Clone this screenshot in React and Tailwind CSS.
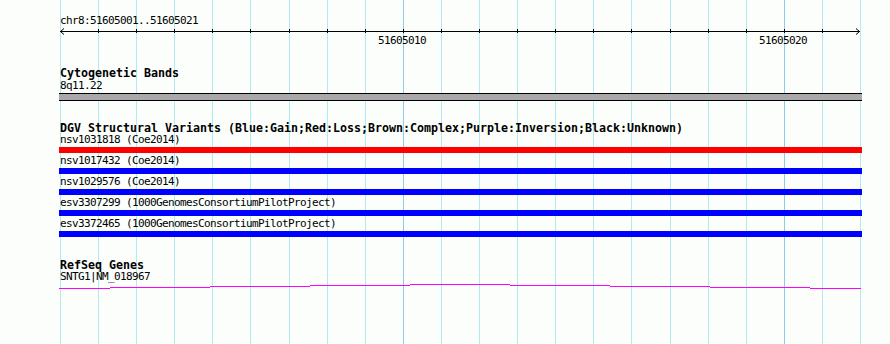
const GRID = Array.from({ length: 22 }, (_, i) => Math.round(60 + (i * 800) / 21));

const TRACKS = [
  { name: 'nsv1031818 (Coe2014)', color: 'bg-[#ff0000]' },
  { name: 'nsv1017432 (Coe2014)', color: 'bg-[#0000ff]' },
  { name: 'nsv1029576 (Coe2014)', color: 'bg-[#0000ff]' },
  { name: 'esv3307299 (1000GenomesConsortiumPilotProject)', color: 'bg-[#0000ff]' },
  { name: 'esv3372465 (1000GenomesConsortiumPilotProject)', color: 'bg-[#0000ff]' },
];

// intron line of the gene: [x0, x1, row]
const GENE = [
  [0, 51, 4],
  [51, 151, 3],
  [151, 251, 2],
  [251, 351, 1],
  [351, 451, 0],
  [451, 551, 1],
  [551, 651, 2],
  [651, 751, 3],
  [751, 802, 4],
];

function Label({ children, className = '' }) {
  return (
    <div className={'relative -top-px ml-px h-[12px] text-[11px] leading-[12px] tracking-[-0.62px] whitespace-pre text-black ' + className}>
      {children}
    </div>
  );
}

function Title({ children, className = '' }) {
  return (
    <div className={'relative -top-px ml-px h-[12px] text-[11.63px] font-bold leading-[12px] whitespace-pre text-black ' + className}>
      {children}
    </div>
  );
}

function Ruler() {
  return (
    <svg width="803" height="19" className="block">
      <line x1="1" y1="3.5" x2="801" y2="3.5" stroke="#000" />
      <polyline points="5,0.5 1.5,3.5 5,6.5" fill="none" stroke="#000" />
      <polyline points="797,0.5 800.5,3.5 797,6.5" fill="none" stroke="#000" />
      {GRID.slice(1, 21).map((x) => (
        <line key={x} x1={x - 59 + 0.5} y1="1" x2={x - 59 + 0.5} y2="5" stroke="#000" />
      ))}
      <text x="319" y="16" fontSize="11" letterSpacing="-0.62" fill="#000" fontFamily="DejaVu Sans Mono, monospace">
        51605010
      </text>
      <text x="700" y="16" fontSize="11" letterSpacing="-0.62" fill="#000" fontFamily="DejaVu Sans Mono, monospace">
        51605020
      </text>
    </svg>
  );
}

export default function App() {
  return (
    <div className="relative w-[890px] h-[344px] overflow-hidden bg-[#fbfefb] font-['DejaVu_Sans_Mono',monospace]">
      <svg width="890" height="344" className="absolute inset-0">
        {GRID.map((x, i) => (
          <rect key={x} x={x} y="0" width="1" height="344" fill={i === 9 || i === 19 ? '#8ccbec' : '#b2ebee'} />
        ))}
      </svg>

      <div className="relative flex flex-col pl-[59px] w-[862px]">
        <Label className="mt-[16px]">chr8:51605001..51605021</Label>
        <Ruler />

        <Title className="mt-[21px]">Cytogenetic Bands</Title>
        <Label className="mt-px">8q11.22</Label>
        <div className="h-[8px] border-y border-black bg-[#aaa8aa]" />

        <Title className="mt-[22px]">
          DGV Structural Variants (Blue:Gain;Red:Loss;Brown:Complex;Purple:Inversion;Black:Unknown)
        </Title>
        {TRACKS.map((t, i) => (
          <div key={t.name} className={i === 0 ? '' : 'mt-[3px]'}>
            <Label>{t.name}</Label>
            <div className={'h-[6px] ' + t.color} />
          </div>
        ))}

        <Title className="mt-[23px]">RefSeq Genes</Title>
        <Label>SNTG1|NM_018967</Label>
        <svg width="803" height="5" className="block">
          {GENE.map(([a, b, r]) => (
            <rect key={a} x={a} y={r} width={b - a} height="1" fill="#ff00ff" />
          ))}
        </svg>
      </div>
    </div>
  );
}
